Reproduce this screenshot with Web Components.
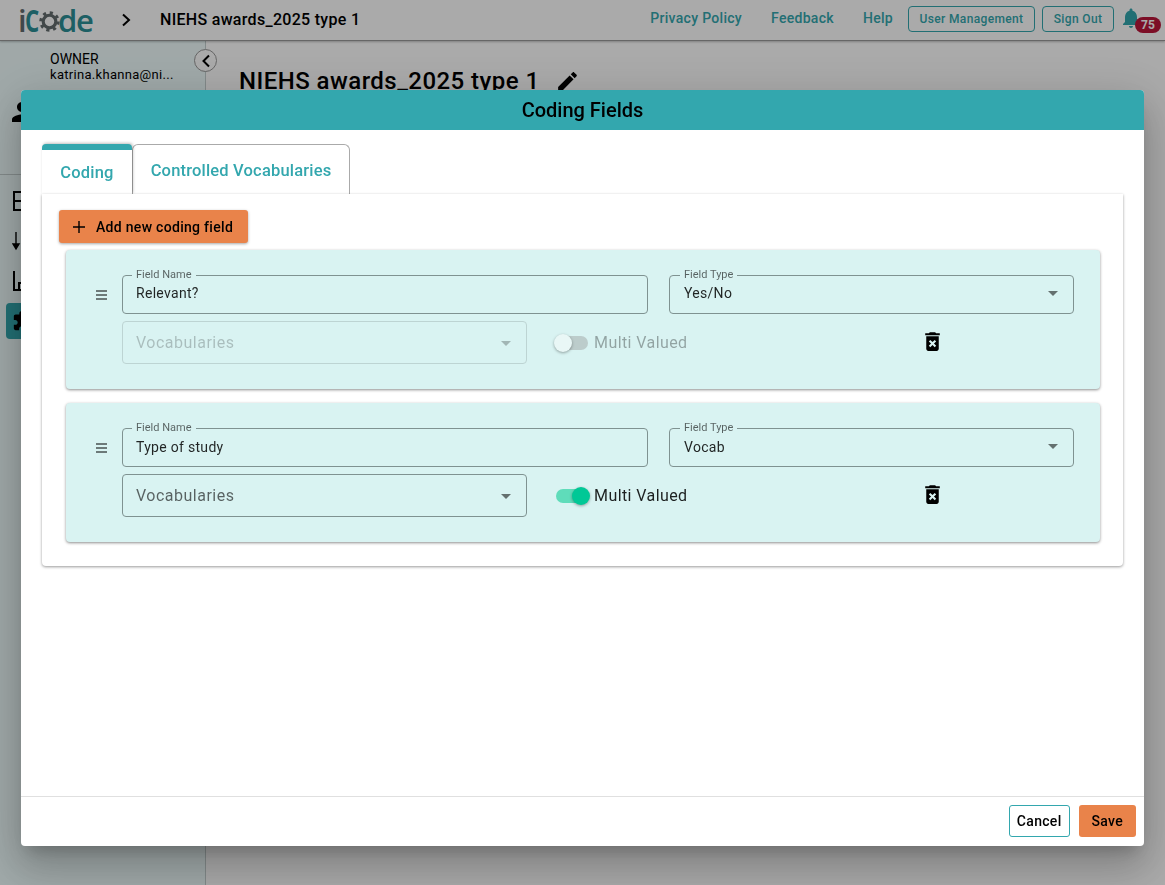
<!DOCTYPE html>
<html lang="en">
<head>
<meta charset="utf-8">
<title>iCode</title>
<style>
  html, body { margin: 0; padding: 0; height: 100%; }
  body { font-family: Roboto, "Liberation Sans", sans-serif; overflow: hidden; }
</style>
</head>
<body>
<icode-app>
  <app-header slot="header" title-text="NIEHS awards_2025 type 1"></app-header>
  <app-sidebar slot="side" role-name="OWNER" email="katrina.khanna@ni..."></app-sidebar>
  <project-main slot="main" title-text="NIEHS awards_2025 type 1"></project-main>
</icode-app>
<coding-dialog heading="Coding Fields">
  <tab-strip></tab-strip>
  <tab-panel>
    <action-button slot="action" kind="orange" plus>Add new coding field</action-button>
    <field-card name="Relevant?" type="Yes/No" disabled></field-card>
    <field-card name="Type of study" type="Vocab" checked></field-card>
  </tab-panel>
  <action-button slot="footer" kind="outline">Cancel</action-button>
  <action-button slot="footer" kind="orange">Save</action-button>
</coding-dialog>

<script>
class IcodeApp extends HTMLElement {
  constructor() {
    super();
    this.attachShadow({mode: "open"}).innerHTML = `
      <style>
        :host { display: grid; grid-template-columns: 206px 1fr; grid-template-rows: 41px 1fr; height: 885px; background: #fff; }
        ::slotted([slot=header]) { grid-column: 1 / 3; }
      </style>
      <slot name="header"></slot>
      <slot name="side"></slot>
      <slot name="main"></slot>`;
  }
}

class AppHeader extends HTMLElement {
  constructor() {
    super();
    this.attachShadow({mode: "open"});
  }
  connectedCallback() {
    this.shadowRoot.innerHTML = `
      <style>
        :host { display: flex; align-items: center; height: 40px; border-bottom: 1px solid #999; box-shadow: 0 1px 2px rgba(0,0,0,.25); background: #fff; position: relative; z-index: 2; color: #33a7ae; }
        .logo { display: flex; align-items: center; width: 102px; height: 40px; margin-left: 18px; font: 600 31px/38px "Open Sans", sans-serif; color: #2c8f96; flex: none; }
        .logo .i { color: #646c6e; letter-spacing: -1.4px; }
        .logo .c { font-weight: 700; margin-right: -6px; transform: scaleX(.72); transform-origin: left center; }
        .logo .de { letter-spacing: -1.4px; margin-left: -2px; }
        .logo svg { width: 21px; height: 21px; margin: 3px 0 0 0; flex: none; }
        .crumb { width: 12px; height: 14px; flex: none; }
        h2 { margin: 0 0 0 28px; font: 500 16px/20px Roboto, sans-serif; color: #000; letter-spacing: .3px; flex: 1; }
        nav { display: flex; align-items: center; font: 500 14px/20px Roboto, sans-serif; letter-spacing: .3px; margin-bottom: 4px; }
        nav a:nth-child(1) { margin-right: 29px; }
        nav a:nth-child(2) { margin-right: 29px; }
        nav a:nth-child(3) { margin-right: 15px; }
        .btn { box-sizing: border-box; border: 1px solid #33a7ae; border-radius: 4px; height: 26px; font: 500 12px/24px Roboto, sans-serif; letter-spacing: .35px; text-align: center; }
        .um { width: 127px; margin-right: 7px; margin-bottom: 3px; }
        .so { width: 72px; margin-right: 7px; margin-bottom: 3px; }
        .bell { position: relative; width: 44px; height: 40px; flex: none; }
        .bell svg { position: absolute; left: -2px; top: 6px; width: 24px; height: 24px; fill: #33a7ae; }
        .badge { position: absolute; left: 14px; top: 17px; width: 26px; height: 16px; border-radius: 8px; background: #ba153a; color: #fff; font: 700 12px/16px Roboto, sans-serif; text-align: center; }
      </style>
      <div class="logo"><span class="i">i</span><span class="c">C</span>
        <svg viewBox="0 0 24 24"><circle cx="12" cy="12" r="7.2" fill="none" stroke="#646c6e" stroke-width="3.6"/><circle cx="12" cy="12" r="10" fill="none" stroke="#646c6e" stroke-width="3.4" stroke-dasharray="3.6 4.25"/></svg>
        <span class="de">de</span></div>
      <svg class="crumb" viewBox="0 0 12 14"><polyline points="3,1.5 9,7 3,12.5" fill="none" stroke="#000" stroke-width="2"/></svg>
      <h2>${this.getAttribute("title-text")}</h2>
      <nav><a>Privacy Policy</a><a>Feedback</a><a>Help</a></nav>
      <div class="btn um">User Management</div>
      <div class="btn so">Sign Out</div>
      <div class="bell">
        <svg viewBox="0 0 24 24"><path d="M12 22c1.1 0 2-.9 2-2h-4c0 1.1.89 2 2 2zm6-6v-5c0-3.07-1.64-5.64-4.5-6.32V4c0-.83-.67-1.5-1.5-1.5s-1.5.67-1.5 1.5v.68C7.63 5.36 6 7.92 6 11v5l-2 2v1h16v-1l-2-2z"/></svg>
        <span class="badge">75</span>
      </div>`;
  }
}

class AppSidebar extends HTMLElement {
  constructor() {
    super();
    this.attachShadow({mode: "open"});
  }
  connectedCallback() {
    this.shadowRoot.innerHTML = `
      <style>
        :host { display: block; position: relative; box-sizing: border-box; background: #f0fdfd; border-right: 1px solid #c4cfcf; color: #000; }
        .who { padding: 10px 0 0 50px; height: 38px; font: 400 14px/16px Roboto, sans-serif; }
        .who div + div { font-size: 13px; letter-spacing: .3px; }
        .person { height: 78px; padding-left: 7px; box-sizing: border-box; border-bottom: 1px solid #c4cfcf; }
        .person svg { width: 30px; height: 30px; fill: #000; margin-top: 8px; display: block; }
        .menu { display: flex; flex-direction: column; padding: 8px 0 0 6px; }
        .item { height: 36px; margin-bottom: 4px; padding-left: 6px; border-radius: 4px; display: flex; align-items: center; }
        .item svg { width: 22px; height: 22px; }
        .item.active { background: #33a7ae; }
        .collapse { position: absolute; right: -12px; top: 8px; box-sizing: border-box; width: 23px; height: 23px; border-radius: 50%; border: 1px solid #999; background: #fff; display: flex; align-items: center; justify-content: center; }
        .collapse svg { width: 10px; height: 14px; }
      </style>
      <div class="who"><div>${this.getAttribute("role-name")}</div><div>${this.getAttribute("email")}</div></div>
      <div class="person"><svg viewBox="0 0 24 24"><path d="M12 12c2.21 0 4-1.79 4-4s-1.79-4-4-4-4 1.79-4 4 1.79 4 4 4zm0 2c-2.67 0-8 1.34-8 4v2h16v-2c0-2.66-5.33-4-8-4z"/></svg></div>
      <div class="menu">
        <div class="item"><svg viewBox="0 0 22 22"><rect x="2" y="2" width="14" height="18" fill="none" stroke="#000" stroke-width="2"/><path d="M2 11h14" stroke="#000" stroke-width="2"/></svg></div>
        <div class="item"><svg viewBox="0 0 22 22"><path d="M4 2v16M1 14l3 5 3-5z" stroke="#000" stroke-width="1.4" fill="#000"/></svg></div>
        <div class="item"><svg viewBox="0 0 22 22"><path d="M2 1v19h18M7 20v-7h4v7M14 20V9h4v11" fill="none" stroke="#000" stroke-width="2"/></svg></div>
        <div class="item active"><svg viewBox="0 0 24 24"><path d="M20.5 11H19V7c0-1.1-.9-2-2-2h-4V3.5C13 2.12 11.88 1 10.5 1S8 2.12 8 3.5V5H4c-1.1 0-2 .9-2 2v3.8h1.5c1.49 0 2.7 1.21 2.7 2.7s-1.21 2.7-2.7 2.7H2V20c0 1.1.9 2 2 2h3.8v-1.5c0-1.49 1.21-2.7 2.7-2.7s2.7 1.21 2.7 2.7V22H17c1.1 0 2-.9 2-2v-4h1.5c1.38 0 2.5-1.12 2.5-2.5S21.88 11 20.5 11z"/></svg></div>
      </div>
      <div class="collapse"><svg viewBox="0 0 10 14"><polyline points="8,1.5 2.5,7 8,12.5" fill="none" stroke="#000" stroke-width="2"/></svg></div>`;
  }
}

class ProjectMain extends HTMLElement {
  constructor() {
    super();
    this.attachShadow({mode: "open"});
  }
  connectedCallback() {
    this.shadowRoot.innerHTML = `
      <style>
        :host { display: block; padding: 25px 0 0 33px; background: #fff; }
        h1 { margin: 0; display: flex; align-items: center; font: 500 24px/30px Roboto, sans-serif; color: #000; letter-spacing: .45px; }
        svg { width: 25px; height: 25px; margin-left: 15px; }
      </style>
      <h1>${this.getAttribute("title-text")}<svg viewBox="0 0 24 24"><path d="M3 17.25V21h3.75L17.81 9.94l-3.75-3.75L3 17.25zM20.71 7.04c.39-.39.39-1.02 0-1.41l-2.34-2.34c-.39-.39-1.02-.39-1.41 0l-1.83 1.83 3.75 3.75 1.83-1.83z"/></svg></h1>`;
  }
}

class CodingDialog extends HTMLElement {
  constructor() {
    super();
    this.attachShadow({mode: "open"});
  }
  connectedCallback() {
    this.shadowRoot.innerHTML = `
      <style>
        :host { position: fixed; inset: 0; z-index: 10; display: flex; box-sizing: border-box; padding: 90px 21px 39px; background: rgba(0,0,0,.333); }
        .box { flex: 1; display: flex; flex-direction: column; background: #fff; border-radius: 4px; box-shadow: 0 11px 15px -7px rgba(0,0,0,.2), 0 24px 38px 3px rgba(0,0,0,.14), 0 9px 46px 8px rgba(0,0,0,.12); overflow: hidden; }
        header { height: 40px; background: #33a7ae; color: #000; text-align: center; font: 500 20px/40px Roboto, sans-serif; flex: none; }
        .body { flex: 1; padding: 14px 21px 0; }
        footer { flex: none; height: 50px; box-sizing: border-box; border-top: 1px solid #e0e0e0; display: flex; justify-content: flex-end; align-items: center; gap: 9px; padding: 0 8px 2px 0; }
      </style>
      <div class="box">
        <header>${this.getAttribute("heading")}</header>
        <div class="body"><slot></slot></div>
        <footer><slot name="footer"></slot></footer>
      </div>`;
  }
}

class TabStrip extends HTMLElement {
  constructor() {
    super();
    this.attachShadow({mode: "open"}).innerHTML = `
      <style>
        :host { display: flex; height: 50px; font: 500 16.5px/20px Roboto, sans-serif; letter-spacing: .18px; color: #33a7ae; }
        .tab { box-sizing: border-box; height: 50px; display: flex; justify-content: center; }
        .on { width: 90px; border-top: 6px solid #33a7ae; border-radius: 4px 4px 0 0; padding-top: 13px; box-shadow: 1px -1px 3px rgba(0,0,0,.25); background: #fff; position: relative; z-index: 1; }
        .off { width: 218px; margin-left: 0; border: 1px solid #aaa; border-bottom: 0; border-radius: 6px 6px 0 0; padding-top: 16px; }
      </style>
      <div class="tab on">Coding</div>
      <div class="tab off">Controlled Vocabularies</div>`;
  }
}

class TabPanel extends HTMLElement {
  constructor() {
    super();
    this.attachShadow({mode: "open"}).innerHTML = `
      <style>
        :host { display: block; position: relative; z-index: 2; box-sizing: border-box; padding: 16px 23px 24px 24px; background: #fff; border-radius: 0 0 4px 4px; box-shadow: 0 1px 3px rgba(0,0,0,.4); }
        .action { margin: 0 0 7px -7px; }
        .list { display: flex; flex-direction: column; gap: 14px; }
      </style>
      <div class="action"><slot name="action"></slot></div>
      <div class="list"><slot></slot></div>`;
  }
}

class ActionButton extends HTMLElement {
  constructor() {
    super();
    this.attachShadow({mode: "open"});
  }
  connectedCallback() {
    const plus = this.hasAttribute("plus");
    this.shadowRoot.innerHTML = `
      <style>
        :host { display: inline-flex; align-items: center; box-sizing: border-box; border-radius: 3px; font: 500 14px/20px Roboto, sans-serif; letter-spacing: .3px; color: #000; }
        :host([kind=orange]) { background: #e9834a; height: 32px; padding: 0 13px; }
        :host([kind=outline]) { background: #fff; border: 1px solid #33a7ae; height: 32px; padding: 0 7px; }
        :host([plus]) { height: 33px; width: 189px; padding: 0 0 0 14px; box-shadow: 0 1px 3px rgba(0,0,0,.35); }
        svg { width: 12px; height: 12px; margin-right: 11px; }
      </style>
      ${plus ? '<svg viewBox="0 0 12 12"><path d="M6 0v12M0 6h12" stroke="#000" stroke-width="1.4"/></svg>' : ""}
      <slot></slot>`;
  }
}

class OutlinedField extends HTMLElement {
  constructor() {
    super();
    this.attachShadow({mode: "open"});
  }
  connectedCallback() {
    const label = this.getAttribute("label");
    const caret = this.hasAttribute("caret");
    this.shadowRoot.innerHTML = `
      <style>
        :host { display: flex; align-items: center; position: relative; box-sizing: border-box; height: 39px; padding: 0 15px var(--field-bottom, 3px) var(--field-left, 13px); border: 1px solid #7f9291; border-radius: 4px; font: 400 14px/20px Roboto, sans-serif; letter-spacing: .3px; color: rgba(0,0,0,.85); }
        :host([tall]) { height: 43px; padding-top: 1px; padding-bottom: 0; font-size: 16px; letter-spacing: .5px; color: rgba(0,0,0,.6); }
        :host([off]) { border-color: #bdd4d3; color: rgba(0,0,0,.22); }
        label { position: absolute; left: calc(var(--field-left, 13px) - 4px); top: -7px; padding: 0 4px; background: #d9f3f2; font-size: 11px; line-height: 12px; letter-spacing: 0; color: rgba(0,0,0,.6); }
        span { flex: 1; }
        i { width: 0; height: 0; border: 5px solid transparent; border-top-color: rgba(0,0,0,.54); border-bottom: 0; }
        :host([off]) i { border-top-color: rgba(0,0,0,.25); }
      </style>
      ${label ? `<label>${label}</label>` : ""}
      <span><slot></slot></span>
      ${caret ? "<i></i>" : ""}`;
  }
}

class ToggleSwitch extends HTMLElement {
  constructor() {
    super();
    this.attachShadow({mode: "open"}).innerHTML = `
      <style>
        :host { display: flex; align-items: center; font: 400 16px/20px Roboto, sans-serif; letter-spacing: .42px; color: rgba(0,0,0,.87); }
        :host([off]) { color: rgba(0,0,0,.33); }
        .sw { position: relative; width: 32px; height: 14px; margin-right: 6px; border-radius: 7px; background: #5fdcba; }
        .thumb { position: absolute; right: -2px; top: -2px; width: 18px; height: 18px; border-radius: 50%; background: #00c896; box-shadow: 0 1px 3px rgba(0,0,0,.35); }
        :host([off]) .sw { background: #bccccb; }
        :host([off]) .thumb { right: auto; left: -2px; background: #e9f7f6; }
      </style>
      <div class="sw"><div class="thumb"></div></div>
      <slot></slot>`;
  }
}

class FieldCard extends HTMLElement {
  constructor() {
    super();
    this.attachShadow({mode: "open"});
  }
  connectedCallback() {
    const off = this.hasAttribute("disabled") ? "off" : "";
    this.shadowRoot.innerHTML = `
      <style>
        :host { display: grid; grid-template-columns: 26px 526px 426px; align-content: start; box-sizing: border-box; height: 139px; padding: 25px 26px 0 30px; background: #d9f3f2; border-radius: 4px; box-shadow: 0 1px 3px rgba(0,0,0,.45); }
        :host([checked]) .top { --field-bottom: 2px; }
        .drag { display: flex; align-items: center; height: 39px; }
        .drag svg { width: 11px; height: 10px; }
        .top { display: contents; }
        outlined-field[label="Field Type"] { margin-left: 21px; width: 405px; --field-left: 14px; }
        .bottom { grid-column: 2 / 4; display: flex; align-items: center; margin-top: 7px; }
        .bottom outlined-field { width: 405px; flex: none; }
        toggle-switch { margin-left: 29px; width: 364px; flex: none; }
        .trash { width: 25px; height: 25px; flex: none; margin-top: -2px; }
      </style>
      <div class="top">
        <div class="drag"><svg viewBox="0 0 11 10"><path d="M0 1h11M0 5h11M0 9h11" stroke="#000" stroke-width="1"/></svg></div>
        <outlined-field label="Field Name">${this.getAttribute("name")}</outlined-field>
        <outlined-field label="Field Type" caret>${this.getAttribute("type")}</outlined-field>
      </div>
      <div class="bottom">
        <outlined-field tall caret ${off}>Vocabularies</outlined-field>
        <toggle-switch ${off}>Multi Valued</toggle-switch>
        <svg class="trash" viewBox="0 0 24 24"><path d="M6 19c0 1.1.9 2 2 2h8c1.1 0 2-.9 2-2V7H6v12zm2.46-7.12l1.41-1.41L12 12.59l2.12-2.12 1.41 1.41L13.41 14l2.12 2.12-1.41 1.41L12 15.41l-2.12 2.12-1.41-1.41L10.59 14l-2.13-2.12zM15.5 4l-1-1h-5l-1 1H5v2h14V4z"/></svg>
      </div>`;
  }
}

customElements.define("icode-app", IcodeApp);
customElements.define("app-header", AppHeader);
customElements.define("app-sidebar", AppSidebar);
customElements.define("project-main", ProjectMain);
customElements.define("coding-dialog", CodingDialog);
customElements.define("tab-strip", TabStrip);
customElements.define("tab-panel", TabPanel);
customElements.define("action-button", ActionButton);
customElements.define("outlined-field", OutlinedField);
customElements.define("toggle-switch", ToggleSwitch);
customElements.define("field-card", FieldCard);
</script>
</body>
</html>
